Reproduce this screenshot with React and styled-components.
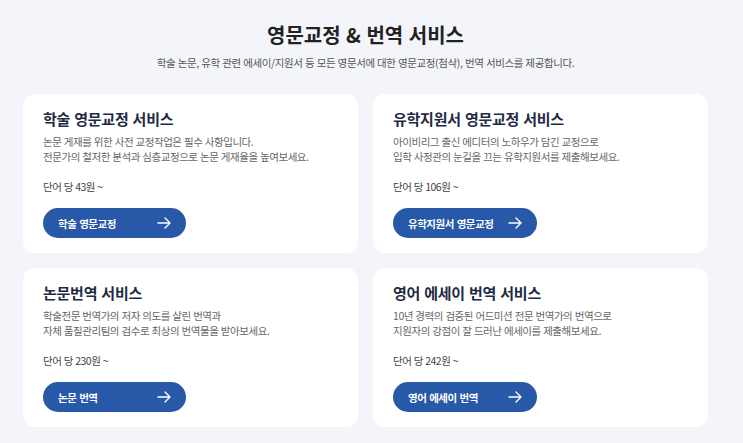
import React from 'react'
import styled, { createGlobalStyle } from 'styled-components'

const GlobalStyle = createGlobalStyle`
  html, body { margin:0; padding:0; background:#f4f5fa; }
  body { font-family: "Noto Sans CJK KR", "Noto Sans", sans-serif; color:#222; }
  * { box-sizing: border-box; }
`;

const Page = styled.div`
  width:743px; height:443px; overflow:hidden;
  padding:21px 35px 0 23px;
`;

const Head = styled.header`
  text-align:center;
`;
const Title = styled.h1`
  margin:0; font-size:20px; line-height:28px; font-weight:700;
  color:#222; letter-spacing:0; word-spacing:1px;
`;
const Sub = styled.p`
  margin:6px 0 0; font-size:10.5px; line-height:16px; color:#555;
  letter-spacing:-0.4px; word-spacing:0.5px;
`;

const Grid = styled.div`
  margin-top:23px;
  display:grid; grid-template-columns:repeat(2, 335px);
  column-gap:15px; row-gap:15px;
`;

const Card = styled.section`
  background:#fff; border-radius:12px;
  padding:14px 20px 15px;
  display:flex; flex-direction:column; align-items:flex-start;
`;
const CardTitle = styled.h2`
  margin:0; font-size:15px; line-height:22px; font-weight:700;
  color:#1f2b42; letter-spacing:-0.25px; word-spacing:1px;
`;
const Desc = styled.p`
  margin:5px 0 0; font-size:10.5px; line-height:14.5px; color:#666;
  letter-spacing:-0.45px; word-spacing:0.5px;
`;
const Price = styled.div`
  margin-top:15px; font-size:10.5px; line-height:15px; color:#444;
  letter-spacing:-0.5px; word-spacing:0.5px;
`;
const Btn = styled.a`
  margin-top:14px; width:${p => p.$w || 143}px; height:30px; border-radius:15px;
  background:#2858a8; color:#fff; text-decoration:none;
  display:flex; align-items:center; justify-content:space-between;
  padding:0 15px 0 15px;
  font-size:10.5px; font-weight:700; letter-spacing:-0.5px; word-spacing:1px;
  svg { display:block; }
`;

const Arrow = () => (
  <svg width="14" height="12" viewBox="0 0 14 12" fill="none" stroke="#fff" strokeWidth="1.4" strokeLinecap="round" strokeLinejoin="round">
    <path d="M1 6h12M8 1l5 5-5 5" />
  </svg>
);

const services = [
  { title:'학술 영문교정 서비스', lines:['논문 게재를 위한 사전 교정작업은 필수 사항입니다.','전문가의 철저한 분석과 심층교정으로 논문 게재율을 높여보세요.'], price:'단어 당 43원 ~', btn:'학술 영문교정', w:143 },
  { title:'유학지원서 영문교정 서비스', lines:['아이비리그 출신 에디터의 노하우가 담긴 교정으로','입학 사정관의 눈길을 끄는 유학지원서를 제출해보세요.'], price:'단어 당 106원 ~', btn:'유학지원서 영문교정', w:144 },
  { title:'논문번역 서비스', lines:['학술전문 번역가의 저자 의도를 살린 번역과','자체 품질관리팀의 검수로 최상의 번역물을 받아보세요.'], price:'단어 당 230원 ~', btn:'논문 번역', w:143 },
  { title:'영어 에세이 번역 서비스', lines:['10년 경력의 검증된 어드미션 전문 번역가의 번역으로','지원자의 강점이 잘 드러난 에세이를 제출해보세요.'], price:'단어 당 242원 ~', btn:'영어 에세이 번역', w:144 },
];

export default function App() {
  return (
    <Page>
      <GlobalStyle />
      <Head>
        <Title>영문교정 &amp; 번역 서비스</Title>
        <Sub>학술 논문, 유학 관련 에세이/지원서 등 모든 영문서에 대한 영문교정(첨삭), 번역 서비스를 제공합니다.</Sub>
      </Head>
      <Grid>
        {services.map(s => (
          <Card key={s.title}>
            <CardTitle>{s.title}</CardTitle>
            <Desc>{s.lines[0]}<br />{s.lines[1]}</Desc>
            <Price>{s.price}</Price>
            <Btn href="#" $w={s.w}>{s.btn}<Arrow /></Btn>
          </Card>
        ))}
      </Grid>
    </Page>
  );
}
